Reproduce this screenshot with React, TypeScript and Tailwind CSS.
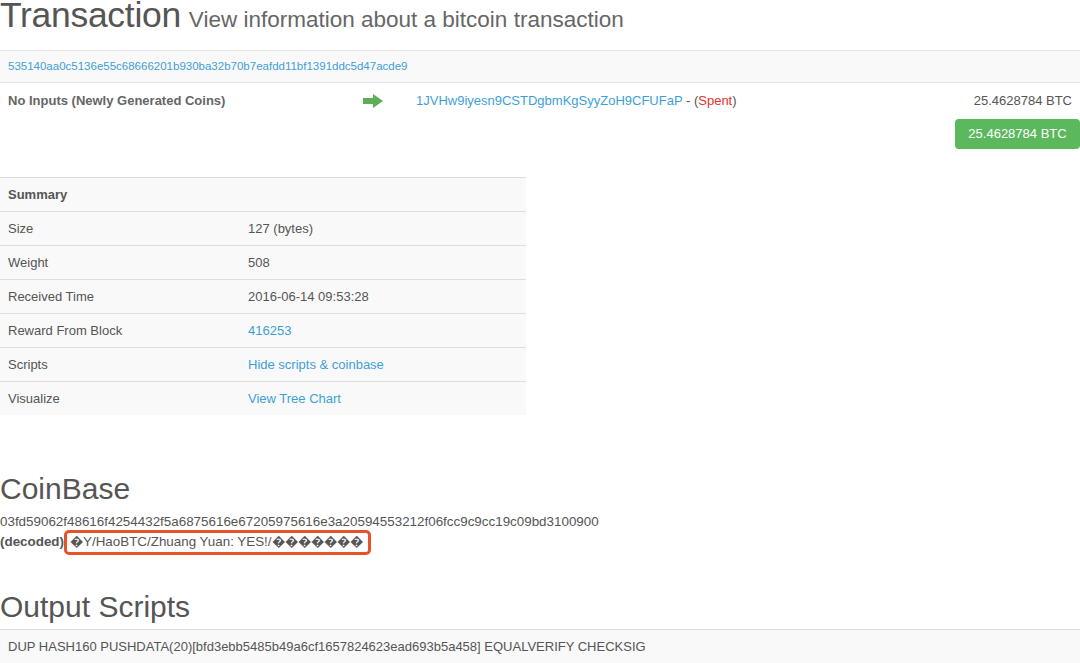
import React from "react";

const font = { fontFamily: '"Liberation Sans", Arial, Helvetica, sans-serif' };

function Arrow() {
  return (
    <svg width="20" height="14" viewBox="0 0 20 14">
      <path d="M0 4 H10 V0 L20 7 L10 14 V10 H0 Z" fill="#5fad56" />
    </svg>
  );
}

const rows: { label: string; value: string; link?: boolean }[] = [
  { label: "Size", value: "127 (bytes)" },
  { label: "Weight", value: "508" },
  { label: "Received Time", value: "2016-06-14 09:53:28" },
  { label: "Reward From Block", value: "416253", link: true },
  { label: "Scripts", value: "Hide scripts & coinbase", link: true },
  { label: "Visualize", value: "View Tree Chart", link: true },
];

export default function App() {
  return (
    <div className="w-[1080px] h-[663px] overflow-hidden bg-white text-[#555]" style={font}>
      <div className="h-[50px] flex items-baseline gap-[8px]">
        <span className="text-[35.5px] leading-[30px] text-[#555] tracking-[-0.3px]">Transaction</span>
        <span className="text-[22.5px] leading-[30px] text-[#666]">View information about a bitcoin transaction</span>
      </div>

      <div className="h-[33px] border-t border-b border-[#e3e3e3] bg-[#f9f9f9] flex items-center px-[8px]">
        <span className="text-[11.5px] text-[#3e9fd8]">535140aa0c5136e55c68666201b930ba32b70b7eafdd11bf1391ddc5d47acde9</span>
      </div>

      <div className="h-[94px] flex text-[13px]">
        <div className="w-[363px] pl-[8px] pt-[10px] font-bold text-[#666] leading-[16px]">No Inputs (Newly Generated Coins)</div>
        <div className="w-[53px] pt-[11px]"><Arrow /></div>
        <div className="flex-1 pt-[10px] leading-[16px]">
          <span className="text-[#3e9fd8]">1JVHw9iyesn9CSTDgbmKgSyyZoH9CFUFaP</span>
          <span className="text-[#555]"> - (</span>
          <span className="text-[#e0332d]">Spent</span>
          <span className="text-[#555]">)</span>
        </div>
        <div className="flex flex-col items-end pt-[10px]">
          <div className="leading-[16px] pr-[8px] text-[#555]">25.4628784 BTC</div>
          <div className="mt-[10px] h-[30px] w-[125px] rounded-[4px] bg-[#5cb85c] text-white flex items-center justify-center">25.4628784 BTC</div>
        </div>
      </div>

      <div className="w-[526px] text-[13px]">
        <div className="h-[34px] border-t border-[#ddd] bg-[#f9f9f9] flex items-center px-[8px] font-bold text-[#555]">Summary</div>
        {rows.map((r) => (
          <div key={r.label} className="h-[34px] border-t border-[#ddd] bg-[#f9f9f9] flex items-center">
            <div className="w-[248px] pl-[8px] text-[#555]">{r.label}</div>
            <div className={r.link ? "text-[#3e9fd8]" : "text-[#555]"}>{r.value}</div>
          </div>
        ))}
      </div>

      <h2 className="mt-[57px] text-[30px] leading-[33px] text-[#555]">CoinBase</h2>
      <div className="mt-[7px] text-[13.4px] leading-[20px] text-[#555]">
        <div>03fd59062f48616f4254432f5a6875616e67205975616e3a20594553212f06fcc9c9cc19c09bd3100900</div>
        <div>
          <span className="font-bold">(decoded)</span>
          <span className="relative ml-[6px]">
            �Y/HaoBTC/Zhuang Yuan: YES!/�������
            <span className="absolute left-[-6px] right-[-8px] top-[-4px] bottom-[-6px] border-[3px] border-[#e8522b] rounded-[5px]" />
          </span>
        </div>
      </div>

      <h2 className="mt-[38px] text-[30px] leading-[33px] text-[#555]">Output Scripts</h2>
      <div className="mt-[6px] h-[34px] border-t border-[#ddd] bg-[#f9f9f9] flex items-center px-[8px] text-[13px] text-[#555]">
        DUP HASH160 PUSHDATA(20)[bfd3ebb5485b49a6cf1657824623ead693b5a458] EQUALVERIFY CHECKSIG
      </div>
    </div>
  );
}
